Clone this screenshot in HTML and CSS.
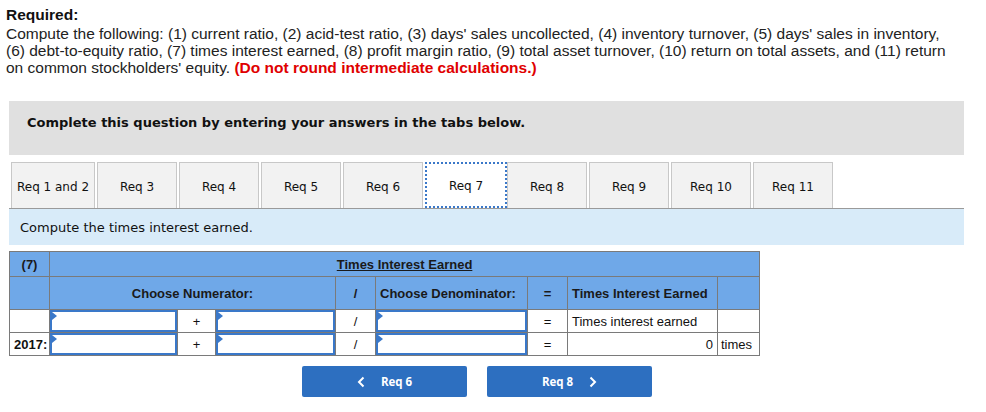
FILE: index.html
```html
<!DOCTYPE html>
<html>
<head>
<meta charset="utf-8">
<link rel="stylesheet" href="styles.css">
</head>
<body>
<div class="page">
  <div class="required">
    <div class="req-title">Required:</div>
    <div class="req-text">Compute the following: (1) current ratio, (2) acid-test ratio, (3) days' sales uncollected, (4) inventory turnover, (5) days' sales in inventory, (6) debt-to-equity ratio, (7) times interest earned, (8) profit margin ratio, (9) total asset turnover, (10) return on total assets, and (11) return on common stockholders' equity. <span class="red">(Do not round intermediate calculations.)</span></div>
  </div>

  <div class="notice">Complete this question by entering your answers in the tabs below.</div>

  <div class="tabs">
    <div class="tab first">Req 1 and 2</div>
    <div class="tab">Req 3</div>
    <div class="tab">Req 4</div>
    <div class="tab">Req 5</div>
    <div class="tab">Req 6</div>
    <div class="tab active">Req 7</div>
    <div class="tab">Req 8</div>
    <div class="tab">Req 9</div>
    <div class="tab">Req 10</div>
    <div class="tab">Req 11</div>
  </div>

  <div class="instr">Compute the times interest earned.</div>

  <table class="grid">
    <colgroup>
      <col class="c1"><col class="c2"><col class="c3"><col class="c4"><col class="c5"><col class="c6"><col class="c7"><col class="c8"><col class="c9">
    </colgroup>
    <tr class="h1">
      <th class="b">(7)</th>
      <th colspan="8" class="title"><u>Times Interest Earned</u></th>
    </tr>
    <tr class="h2">
      <th></th>
      <th colspan="3">Choose Numerator:</th>
      <th>/</th>
      <th class="left">Choose Denominator:</th>
      <th>=</th>
      <th class="left">Times Interest Earned</th>
      <th></th>
    </tr>
    <tr class="r">
      <td></td>
      <td class="in"><div class="box"></div></td>
      <td class="op">+</td>
      <td class="in"><div class="box"></div></td>
      <td class="op">/</td>
      <td class="in"><div class="box"></div></td>
      <td class="op">=</td>
      <td class="left">Times interest earned</td>
      <td></td>
    </tr>
    <tr class="r">
      <td class="b">2017:</td>
      <td class="in"><div class="box"></div></td>
      <td class="op">+</td>
      <td class="in"><div class="box"></div></td>
      <td class="op">/</td>
      <td class="in"><div class="box"></div></td>
      <td class="op">=</td>
      <td class="right">0</td>
      <td class="left unit">times</td>
    </tr>
  </table>

  <div class="nav">
    <div class="btn"><svg class="chev" width="8" height="12" viewBox="0 0 8 12"><path d="M6.5 1.5 L2 6 L6.5 10.5" fill="none" stroke="#fff" stroke-width="2"/></svg><span>Req 6</span></div>
    <div class="btn"><span>Req 8</span><svg class="chev" width="8" height="12" viewBox="0 0 8 12"><path d="M1.5 1.5 L6 6 L1.5 10.5" fill="none" stroke="#fff" stroke-width="2"/></svg></div>
  </div>
</div>
</body>
</html>
```
FILE: styles.css
```css
html, body { margin: 0; padding: 0; background: #fff; }
.page { padding: 6px 0 0 0; }
.required {
  padding-left: 6px;
  width: 945px;
  font-family: "Liberation Sans", Arial, sans-serif;
  font-size: 15.5px;
  line-height: 17px;
  color: #222;
}
.req-title { font-weight: bold; color: #111; margin-bottom: 2px; }
.red { color: #e00000; font-weight: bold; }

.notice {
  margin: 25px 0 0 9px;
  width: 955px;
  height: 54px;
  box-sizing: border-box;
  background: #e0e0e0;
  font-family: "DejaVu Sans", Verdana, sans-serif;
  font-weight: bold;
  font-size: 13px;
  line-height: 16px;
  color: #111;
  padding: 14px 0 0 18px;
}

.tabs {
  margin: 7px 0 0 9px;
  width: 955px;
  display: flex;
  gap: 2px;
  padding-left: 2px;
  box-sizing: border-box;
  border-bottom: 1px solid #9a9a9a;
}
.tab {
  width: 80px;
  height: 46px;
  box-sizing: border-box;
  background: #f2f2f2;
  border: 1px solid #c8c8c8;
  border-bottom: none;
  display: flex;
  align-items: center;
  justify-content: center;
  padding-top: 2px;
  font-family: "DejaVu Sans", Verdana, sans-serif;
  font-size: 12px;
  color: #111;
}
.tab.first { width: 84px; }
.tab.active {
  width: 82px;
  background: #fff;
  border: 2px dotted #3a78c9;
  margin-right: -2px;
}

.instr {
  margin-left: 9px;
  width: 955px;
  height: 36px;
  background: #d8ebf9;
  box-sizing: border-box;
  padding-left: 11px;
  display: flex;
  align-items: center;
  font-family: "DejaVu Sans", Verdana, sans-serif;
  font-size: 13px;
  color: #111;
}

.grid {
  margin: 6px 0 0 9px;
  border-collapse: collapse;
  table-layout: fixed;
  width: 750px;
  font-family: "Liberation Sans", Arial, sans-serif;
  font-size: 13px;
  color: #111;
}
.c1 { width: 40px; } .c2 { width: 128px; } .c3 { width: 38px; } .c4 { width: 120px; }
.c5 { width: 40px; } .c6 { width: 152px; } .c7 { width: 40px; } .c8 { width: 150px; } .c9 { width: 42px; }
.grid th, .grid td {
  border: 1px solid #7a7a7a;
  padding: 0 4px;
  text-align: center;
}
.grid th { background: #6fa8e8; font-weight: bold; color: #1a1a1a; }
.h1 th { height: 24px; }
.h2 th { height: 32px; }
.r td { height: 22px; }
.grid .left { text-align: left; }
.grid .right { text-align: right; }
.grid .b { font-weight: bold; }
.grid .unit { padding-left: 3px; }
.grid td.in { padding: 0; }
.box {
  height: 22px;
  border: 2px solid #3a78c9;
  box-sizing: border-box;
  background: #fff;
  position: relative;
}
.box::before {
  content: "";
  position: absolute;
  left: 0;
  top: 0;
  width: 0;
  height: 0;
  border-top: 4px solid transparent;
  border-bottom: 4px solid transparent;
  border-left: 5px solid #3a78c9;
}

.nav {
  margin: 10px 0 0 302px;
  display: flex;
  gap: 20px;
}
.btn {
  width: 165px;
  height: 31px;
  background: #2d6fc0;
  border-radius: 2px;
  color: #fff;
  font-family: "Open Sans", sans-serif;
  font-weight: bold;
  font-size: 11.5px;
  display: flex;
  align-items: center;
  justify-content: center;
  gap: 16px;
}
.chev { display: block; }
```
